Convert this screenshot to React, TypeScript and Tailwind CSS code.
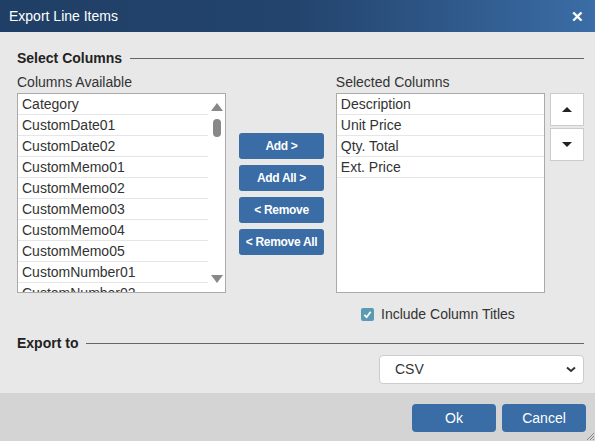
const available = [
  "Category",
  "CustomDate01",
  "CustomDate02",
  "CustomMemo01",
  "CustomMemo02",
  "CustomMemo03",
  "CustomMemo04",
  "CustomMemo05",
  "CustomNumber01",
  "CustomNumber02",
];

const selected = ["Description", "Unit Price", "Qty. Total", "Ext. Price"];

const moveButtons = ["Add >", "Add All >", "< Remove", "< Remove All"];

const font = { fontFamily: '"Liberation Sans", Arial, sans-serif' };

export default function App() {
  return (
    <div className="w-[595px] h-[441px] flex flex-col overflow-hidden text-[#333]" style={font}>
      {/* title bar */}
      <div className="h-8 flex items-center justify-between pl-[9px] pr-[11px] bg-gradient-to-r from-[#1f3f66] via-[#23446d] to-[#3b6da6]">
        <span className="text-white text-[14px]">Export Line Items</span>
        <span className="text-white text-[15px] font-bold leading-none">✕</span>
      </div>

      {/* body */}
      <div className="flex-1 bg-[#e8e8e8] pl-[17px] pr-[11px] pt-[19px]">
        <div className="flex items-center gap-2 h-[15px]">
          <span className="text-[14px] font-bold text-[#222]">Select Columns</span>
          <div className="flex-1 h-px bg-[#666]" />
        </div>

        <div className="flex mt-[9px]">
          <div className="w-[210px] flex flex-col">
            <span className="text-[14px] leading-[15px] mb-[3px]">Columns Available</span>
            <div className="h-[200px] border border-[#aaa] bg-white flex overflow-hidden">
              <div className="flex-1 overflow-hidden">
                {available.map((c) => (
                  <div key={c} className="h-[21px] border-b border-[#e6e6e6] pl-1 text-[14px] leading-[20px] whitespace-nowrap">
                    {c}
                  </div>
                ))}
              </div>
              <div className="w-[17px] flex flex-col items-center justify-between py-[9px]">
                <div className="flex flex-col items-center gap-[8px]">
                  <div className="w-0 h-0 border-l-[6px] border-r-[6px] border-b-[8px] border-l-transparent border-r-transparent border-b-[#888]" />
                  <div className="w-[8px] h-[18px] rounded-full bg-[#888]" />
                </div>
                <div className="w-0 h-0 border-l-[6px] border-r-[6px] border-t-[8px] border-l-transparent border-r-transparent border-t-[#888]" />
              </div>
            </div>
          </div>

          <div className="w-[85px] ml-[13px] mt-[58px] flex flex-col gap-[6px]">
            {moveButtons.map((b) => (
              <button key={b} className="h-[26px] rounded-[3px] bg-[#3a6ca5] text-white text-[12px] font-bold tracking-[-0.3px]">
                {b}
              </button>
            ))}
          </div>

          <div className="w-[210px] ml-[12px] flex flex-col">
            <span className="text-[14px] leading-[15px] mb-[3px]">Selected Columns</span>
            <div className="h-[200px] border border-[#aaa] bg-white">
              {selected.map((c) => (
                <div key={c} className="h-[21px] border-b border-[#e6e6e6] pl-1 text-[14px] leading-[20px]">
                  {c}
                </div>
              ))}
            </div>
          </div>

          <div className="ml-[5px] mt-[18px] flex flex-col gap-[2px]">
            <button className="w-[34px] h-[33px] bg-white border border-[#ccc] flex items-center justify-center">
              <div className="w-0 h-0 border-l-[5px] border-r-[5px] border-b-[5px] border-l-transparent border-r-transparent border-b-[#222]" />
            </button>
            <button className="w-[34px] h-[33px] bg-white border border-[#ccc] flex items-center justify-center">
              <div className="w-0 h-0 border-l-[5px] border-r-[5px] border-t-[5px] border-l-transparent border-r-transparent border-t-[#222]" />
            </button>
          </div>
        </div>

        <div className="flex items-center mt-[13px] ml-[344px] gap-[7px]">
          <div className="w-[13px] h-[13px] rounded-[2px] bg-[#5a9ab2] flex items-center justify-center">
            <svg width="9" height="9" viewBox="0 0 10 10">
              <path d="M1.5 5.5 L4 8 L8.5 2" stroke="white" strokeWidth="2" fill="none" />
            </svg>
          </div>
          <span className="text-[14px] leading-[16px]">Include Column Titles</span>
        </div>

        <div className="flex items-center gap-2 h-[15px] mt-[14px]">
          <span className="text-[14px] font-bold text-[#222]">Export to</span>
          <div className="flex-1 h-px bg-[#666]" />
        </div>

        <div className="flex justify-end mt-[4px]">
          <div className="w-[205px] h-[29px] bg-white border border-[#ccc] rounded-[4px] flex items-center justify-between pl-[15px] pr-[7px]">
            <span className="text-[14px]">CSV</span>
            <svg width="10" height="7" viewBox="0 0 10 7">
              <path d="M1 1.5 L5 5 L9 1.5" stroke="#333" strokeWidth="2" fill="none" />
            </svg>
          </div>
        </div>
      </div>

      {/* footer */}
      <div className="h-[48px] bg-[#d4d4d4] flex items-start justify-end gap-[6px] pt-[11px] pr-[9px] relative">
        <button className="w-[84px] h-[28px] rounded-[4px] bg-[#3a6ca5] text-white text-[14px]">Ok</button>
        <button className="w-[84px] h-[28px] rounded-[4px] bg-[#3a6ca5] text-white text-[14px]">Cancel</button>
        <svg className="absolute right-0 bottom-0" width="10" height="10" viewBox="0 0 10 10">
          <path d="M9 2 L2 9 M9 5 L5 9 M9 8 L8 9" stroke="#888" strokeWidth="1" />
        </svg>
      </div>
    </div>
  );
}
